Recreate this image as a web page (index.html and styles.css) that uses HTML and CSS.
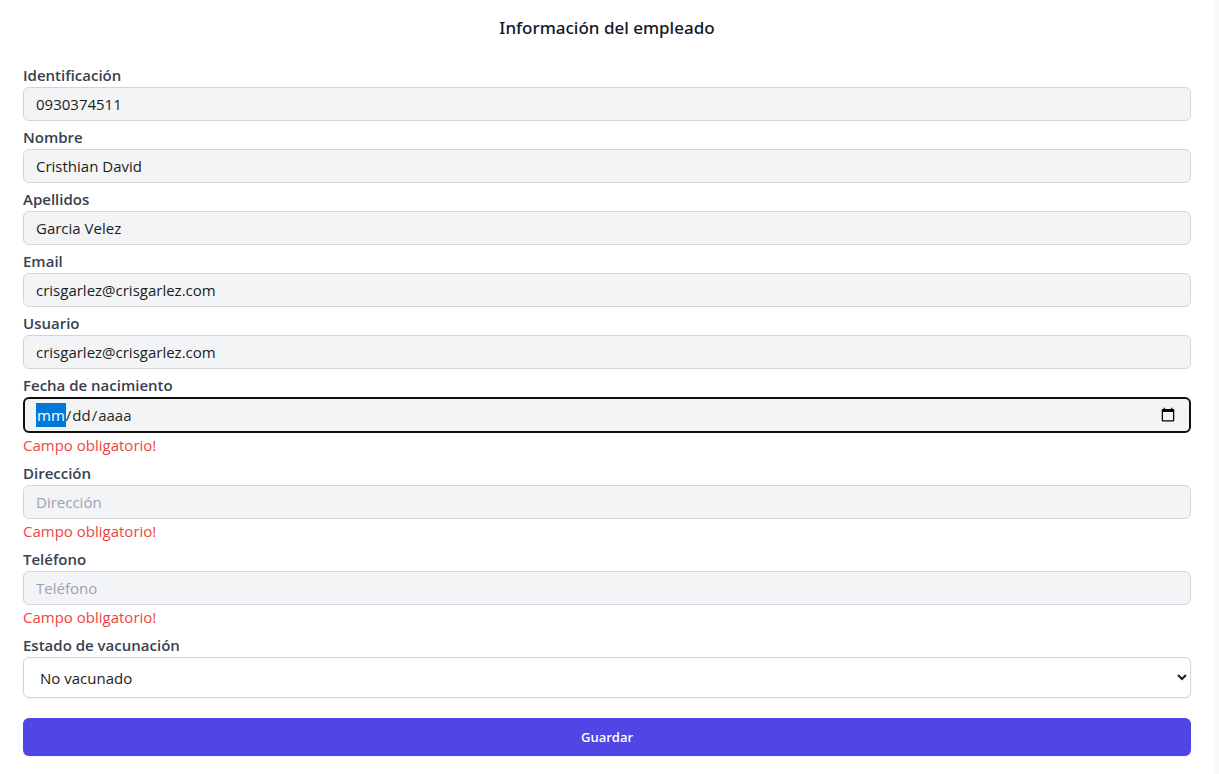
FILE: index.html
```html
<!DOCTYPE html>
<html lang="es">
<head>
<meta charset="utf-8">
<meta name="viewport" content="width=device-width, initial-scale=1">
<title>Información del empleado</title>
<link rel="stylesheet" href="styles.css">
</head>
<body>
<main class="panel">
  <h1 class="title">Información del empleado</h1>
  <form class="form">
    <div class="field">
      <label class="label" for="identificacion">Identificación</label>
      <input class="input" id="identificacion" type="text" value="0930374511">
    </div>
    <div class="field">
      <label class="label" for="nombre">Nombre</label>
      <input class="input" id="nombre" type="text" value="Cristhian David">
    </div>
    <div class="field">
      <label class="label" for="apellidos">Apellidos</label>
      <input class="input" id="apellidos" type="text" value="Garcia Velez">
    </div>
    <div class="field">
      <label class="label" for="email">Email</label>
      <input class="input" id="email" type="email" value="crisgarlez@crisgarlez.com">
    </div>
    <div class="field">
      <label class="label" for="usuario">Usuario</label>
      <input class="input" id="usuario" type="text" value="crisgarlez@crisgarlez.com">
    </div>
    <div class="field">
      <label class="label" for="fecha">Fecha de nacimiento</label>
      <div class="date">
        <input class="input date-input" id="fecha" type="date">
        <span class="date-hint" aria-hidden="true"><span class="date-part date-part-active">mm</span>/<span class="date-part">dd</span>/<span class="date-part">aaaa</span></span>
      </div>
      <p class="error">Campo obligatorio!</p>
    </div>
    <div class="field">
      <label class="label" for="direccion">Dirección</label>
      <input class="input" id="direccion" type="text" placeholder="Dirección">
      <p class="error">Campo obligatorio!</p>
    </div>
    <div class="field">
      <label class="label" for="telefono">Teléfono</label>
      <input class="input" id="telefono" type="tel" placeholder="Teléfono">
      <p class="error">Campo obligatorio!</p>
    </div>
    <div class="field">
      <label class="label" for="estado">Estado de vacunación</label>
      <select class="select" id="estado">
        <option>No vacunado</option>
        <option>Vacunado</option>
      </select>
    </div>
    <button class="button" type="submit">Guardar</button>
  </form>
</main>
</body>
</html>
```
FILE: styles.css
```css
* {
  box-sizing: border-box;
}

body {
  margin: 0;
  padding-right: 4px;
  background: #f9fafb;
  font-family: "Segoe UI", "Open Sans", "Noto Sans", sans-serif;
  font-size: 15px;
  line-height: 24px;
}

.panel {
  min-height: 100vh;
  padding: 14px 24px 16px 23px;
  background: #fff;
}

.title {
  margin: 0 0 21px;
  color: #111827;
  font-family: "Segoe UI", "Noto Sans", sans-serif;
  font-size: 17px;
  font-weight: 500;
  line-height: 28px;
  text-align: center;
}

.form {
  display: flex;
  flex-direction: column;
  gap: 4px;
}

.field {
  display: flex;
  flex-direction: column;
}

.label {
  color: #374151;
  font-weight: 600;
}

.input,
.select {
  width: 100%;
  margin: 0;
  border: 1px solid #d1d5db;
  border-radius: 6px;
  color: #1c1c1c;
  font: inherit;
}

.input {
  height: 34px;
  padding: 4px 12px;
  background: #f3f4f6;
}

.input::placeholder {
  color: #9ca3af;
}

.date {
  position: relative;
}

.date-input {
  display: block;
  height: 36px;
  padding: 4px 11px;
  border: 2px solid #101010;
}

.date-input::-webkit-datetime-edit {
  opacity: 0;
}

.date-input::-webkit-calendar-picker-indicator {
  width: 16px;
  height: 16px;
}

.date-hint {
  position: absolute;
  top: 6px;
  left: 13px;
  color: #262626;
  pointer-events: none;
}

.date-part {
  display: inline-block;
  padding: 0 1px;
}

.date-part-active {
  background: #0078d7;
  color: #fff;
}

.error {
  margin: 0;
  color: #ef4444;
}

.select {
  height: 41px;
  padding: 8px 12px;
  background-color: #fff;
  box-shadow: 0 1px 2px rgba(0, 0, 0, 0.05);
}

.button {
  height: 38px;
  margin-top: 16px;
  border: 0;
  border-radius: 6px;
  background: #4f46e5;
  box-shadow: 0 1px 2px rgba(0, 0, 0, 0.05);
  color: #fff;
  font: inherit;
  font-size: 13px;
  font-weight: 600;
}
```
